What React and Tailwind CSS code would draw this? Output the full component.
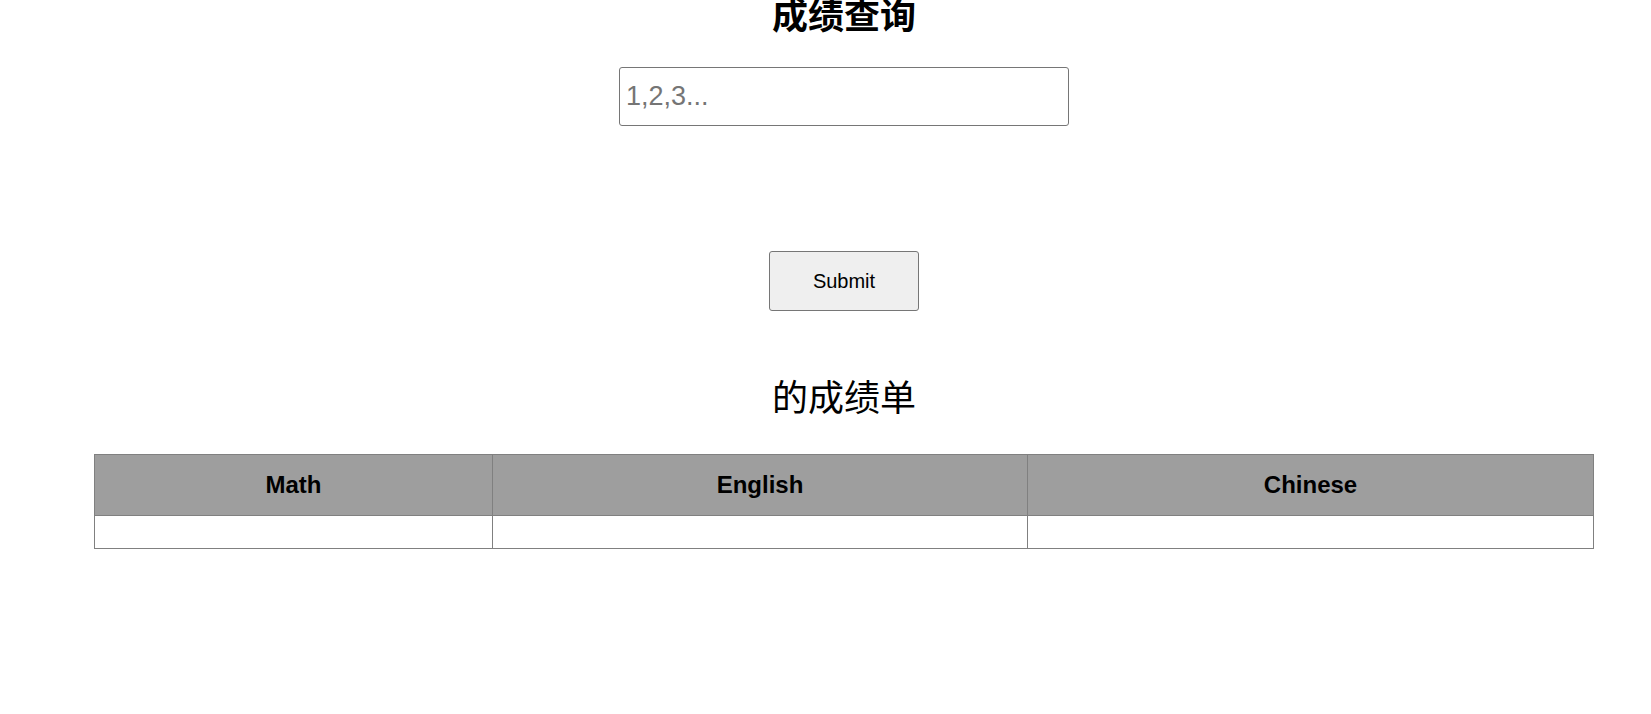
export default function App() {
  const latin = { fontFamily: '"Liberation Sans", Arial, "Noto Sans CJK SC", sans-serif' };
  const cjk = { fontFamily: '"Noto Sans CJK SC", sans-serif' };
  return (
    <div className="w-full min-h-[714px] bg-white overflow-hidden">
      <div className="w-[1688px] flex flex-col items-center text-black" style={latin}>
        <h1 className="mt-[-9px] h-[44px] leading-[44px] text-[36px] font-bold" style={cjk}>成绩查询</h1>
        <input
          type="text"
          placeholder="1,2,3..."
          className="mt-[32px] w-[450px] h-[59px] border border-[#767676] rounded-[3px] px-[6px] text-[27px] placeholder:text-[#757575] outline-none"
          style={latin}
        />
        <button className="mt-[125px] w-[150px] h-[60px] bg-[#efefef] border border-[#767676] rounded-[3px] text-[20px] text-black" style={latin}>
          Submit
        </button>
        <h2 className="mt-[60px] h-[48px] leading-[48px] text-[36px] font-normal" style={cjk}>的成绩单</h2>
        <table className="mt-[35px] w-[1500px] border-collapse border border-[#808080]">
          <thead>
            <tr className="bg-[#9e9e9e] h-[61px]">
              <th className="w-[398px] border border-[#808080] text-[24px] font-bold">Math</th>
              <th className="w-[535px] border border-[#808080] text-[24px] font-bold">English</th>
              <th className="border border-[#808080] text-[24px] font-bold">Chinese</th>
            </tr>
          </thead>
          <tbody>
            <tr className="h-[33px]">
              <td className="border border-[#808080]"></td>
              <td className="border border-[#808080]"></td>
              <td className="border border-[#808080]"></td>
            </tr>
          </tbody>
        </table>
      </div>
    </div>
  );
}
